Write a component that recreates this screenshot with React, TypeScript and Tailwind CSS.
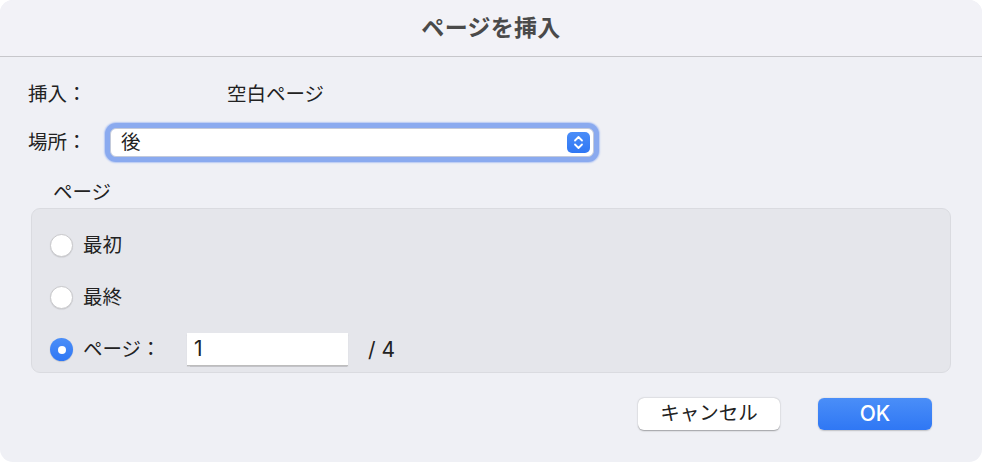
import React from "react";

const font = { fontFamily: 'Inter, "Noto Sans CJK JP", sans-serif' };

function Radio({ checked }: { checked?: boolean }) {
  if (checked) {
    return (
      <div className="w-[23px] h-[23px] rounded-full bg-gradient-to-b from-[#4b8ef8] to-[#2f77f4] flex items-center justify-center shadow-[0_0.5px_1px_rgba(0,0,0,0.25)] shrink-0">
        <div className="w-[8px] h-[8px] rounded-full bg-white" />
      </div>
    );
  }
  return (
    <div className="w-[23px] h-[23px] rounded-full bg-white border border-[#c9c9cc] shadow-[0_0.5px_1px_rgba(0,0,0,0.12)] shrink-0" />
  );
}

export default function App() {
  return (
    <div className="w-[982px] h-[462px] bg-white" style={font}>
      <div className="w-full h-full rounded-[13px] overflow-hidden bg-[#eff0f5] flex flex-col text-[#222222]">
        <div className="h-[57px] shrink-0 border-b border-[#c7c7cb] bg-[#f2f2f7] flex items-center justify-center">
          <span className="text-[23px] font-bold text-[#4a4a4a] leading-none tracking-[0.3px]">ページを挿入</span>
        </div>
        <div className="flex flex-col px-[28px] pt-[24px]">
          <div className="flex items-center h-[28px] text-[19.5px]">
            <span className="w-[199px]">挿入：</span>
            <span>空白ページ</span>
          </div>
          <div className="flex items-center h-[29px] mt-[19px] text-[19.5px]">
            <span className="w-[82px]">場所：</span>
            <div className="w-[484px] h-[29px] rounded-[6px] bg-white border border-[#c3cadb] shadow-[0_0_0_5px_#8aaaef,0_0_1.5px_6px_#b5c8f3] flex items-center justify-between pl-[10px] pr-[3px]">
              <span className="leading-none">後</span>
              <div className="w-[23px] h-[21px] rounded-[5px] bg-gradient-to-b from-[#4a8df8] to-[#2f77f4] flex items-center justify-center">
                <svg width="23" height="21" viewBox="0 0 23 21" fill="none">
                  <path d="M8 8.5 L11.5 5 L15 8.5" stroke="white" strokeWidth="1.8" strokeLinecap="round" strokeLinejoin="round" />
                  <path d="M8 12.5 L11.5 16 L15 12.5" stroke="white" strokeWidth="1.8" strokeLinecap="round" strokeLinejoin="round" />
                </svg>
              </div>
            </div>
          </div>
          <div className="h-[28px] mt-[22px] pl-[25px] flex items-center text-[19.5px]">ページ</div>
          <div className="mx-[3px] mt-[1px] rounded-[9px] bg-[#e5e6eb] border border-[#dadbe0] flex flex-col gap-[19px] pt-[20px] pb-[6px] pl-[18px] text-[19.5px]">
            <div className="flex items-center h-[33px]">
              <Radio />
              <span className="ml-[10px]">最初</span>
            </div>
            <div className="flex items-center h-[33px]">
              <Radio />
              <span className="ml-[10px]">最終</span>
            </div>
            <div className="flex items-center h-[33px]">
              <Radio checked />
              <span className="ml-[10px] w-[104px]">ページ：</span>
              <div className="w-[161px] h-[33px] bg-white border-b border-[#bdbdbd] shadow-[0_0.5px_1px_rgba(0,0,0,0.15)] flex items-center pl-[7px]">
                <span className="text-[21px]">1</span>
              </div>
              <span className="ml-[20px] text-[21px]">/ 4</span>
            </div>
          </div>
          <div className="flex justify-end gap-[38px] mt-[25px] pr-[22px]">
            <div className="w-[142px] h-[32px] rounded-[6px] bg-white shadow-[0_0.5px_1.5px_rgba(0,0,0,0.35)] flex items-center justify-center text-[19.5px] text-[#222222]">
              キャンセル
            </div>
            <div className="w-[114px] h-[32px] rounded-[6px] bg-gradient-to-b from-[#4a8ef8] to-[#2f77f4] shadow-[0_0.5px_1.5px_rgba(0,0,0,0.2)] flex items-center justify-center text-[21px] font-medium text-white">
              OK
            </div>
          </div>
        </div>
      </div>
    </div>
  );
}
